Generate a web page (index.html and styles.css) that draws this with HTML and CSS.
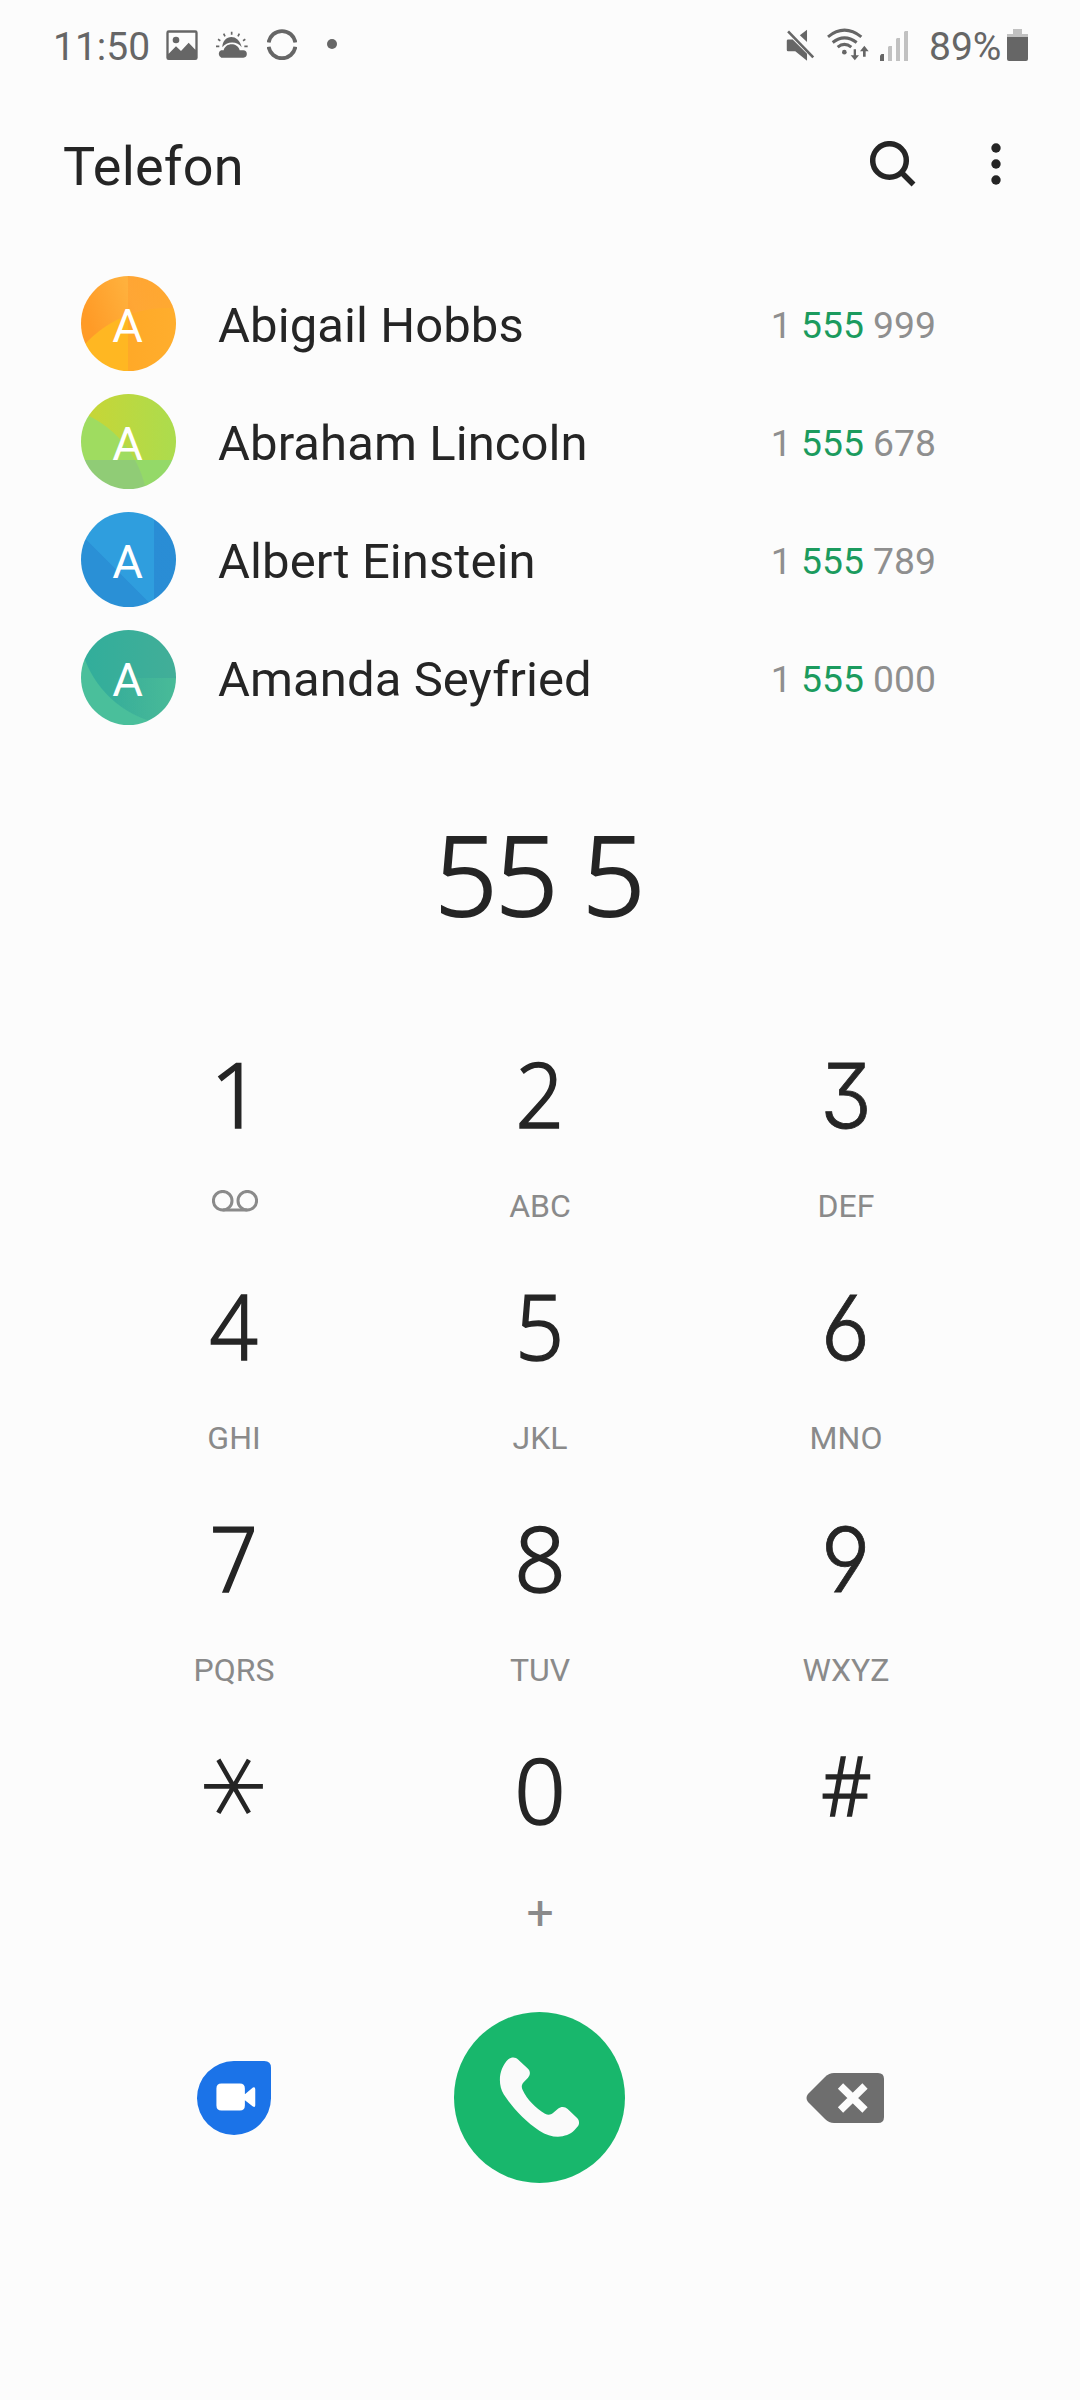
FILE: index.html
```html
<!DOCTYPE html>
<html lang="de">
<head>
<meta charset="utf-8">
<title>Telefon</title>
<link rel="stylesheet" href="styles.css">
</head>
<body>
<header class="status">
  <span class="time">11:50</span>
  <svg class="st-image" viewBox="378 58 96 90"><path fill-rule="evenodd" d="M386 59H466Q473 59 473 66V141Q473 148 466 148H386Q379 148 379 141V66Q379 59 386 59ZM386 66V129L408 107L423 121L446 96L466 117V66Z"/><circle cx="408" cy="88" r="10"/></svg>
  <svg class="st-weather" viewBox="528 60 96 87"><path d="M544 143A12 12 0 0 1 543 121H551C556 98 592 96 599 121H609A11 11 0 0 1 610 143Z"/><path d="M547 112C547 74 596 68 605 112C594 93 560 92 547 112Z"/><g class="ray"><path d="M575 65v9M551 71l4 8M598 71l-4 8M534 88l7 4M616 88l-7 4M528 109h10M613 109h10"/></g></svg>
  <svg class="st-sync" viewBox="680 56 92 94"><path class="arc" d="M685 97A41.500 41.500 0 0 1 767 97M685 110A41.500 41.500 0 0 0 767 110"/></svg>
  <svg class="st-dot" viewBox="0 0 10 10"><circle cx="5" cy="5" r="5"/></svg>
  <div class="status-right">
    <svg class="st-mute" viewBox="76 54 88 98"><path d="M82 86H96L140 130V151L104 122H82Q78 122 78 118V90Q78 86 82 86ZM118 73L140 56V94Z"/><path class="slash" d="M82 61L159 141"/></svg>
    <svg class="st-wifi" viewBox="200 54 126 98"><g class="waves"><path d="M203 80Q252 40 303 80"/><path d="M217 97Q252 69 289 97"/><path d="M232 111Q252 94 273 111"/></g><circle cx="252" cy="126" r="7"/><path d="M280 117H287V135H296L283.500 150L271 135H280ZM308 140V123H299L312 107L325 123H316V140Z"/></svg>
    <svg class="st-signal" viewBox="0 0 28 30"><path d="M0 24.500l1.500-1.500h2.500V30H0z"/><path class="faint" d="M8 16l1-1h3v15H8zM16 8l1-1h3v23H16zM24 1l1-1h3v30H24z"/></svg>
    <span class="percent">89%</span>
    <svg class="st-battery" viewBox="0 0 21 32"><path class="faint" d="M6 0h9v5h6v4H0V5h6z"/><path d="M0 8h21v22q0 2-2 2H2q-2 0-2-2z"/></svg>
  </div>
</header>

<div class="appbar">
  <h1>Telefon</h1>
  <svg class="search" viewBox="0 0 46 46"><circle cx="19.500" cy="19.500" r="16.800"/><path d="M31 31L43.500 43.500"/></svg>
  <svg class="more" viewBox="0 0 10 42"><circle cx="5" cy="5" r="4.700"/><circle cx="5" cy="21" r="4.700"/><circle cx="5" cy="37" r="4.700"/></svg>
</div>

<ul class="contacts">
  <li><span class="avatar orange"><span>A</span></span><span class="name">Abigail Hobbs</span><span class="number">1 <b>555</b> 999</span></li>
  <li><span class="avatar lime"><span>A</span></span><span class="name">Abraham Lincoln</span><span class="number">1 <b>555</b> 678</span></li>
  <li><span class="avatar blue"><span>A</span></span><span class="name">Albert Einstein</span><span class="number">1 <b>555</b> 789</span></li>
  <li><span class="avatar teal"><span>A</span></span><span class="name">Amanda Seyfried</span><span class="number">1 <b>555</b> 000</span></li>
</ul>

<div class="typed">55 5</div>

<main class="keypad">
  <div class="key"><div class="digit"><span class="one">1</span></div><div class="sub icon"><svg class="voicemail" viewBox="0 0 46 22"><circle cx="10.700" cy="10.700" r="9.300"/><circle cx="35.300" cy="10.700" r="9.300"/><path d="M10.700 20H35.300"/></svg></div></div>
  <div class="key"><div class="digit"><span class="two">2</span></div><div class="sub">ABC</div></div>
  <div class="key"><div class="digit"><span class="alt">3</span></div><div class="sub">DEF</div></div>
  <div class="key"><div class="digit"><span class="four">4</span></div><div class="sub">GHI</div></div>
  <div class="key"><div class="digit"><span class="five">5</span></div><div class="sub">JKL</div></div>
  <div class="key"><div class="digit"><span class="alt">6</span></div><div class="sub">MNO</div></div>
  <div class="key"><div class="digit"><span class="seven">7</span></div><div class="sub">PQRS</div></div>
  <div class="key"><div class="digit"><span>8</span></div><div class="sub">TUV</div></div>
  <div class="key"><div class="digit"><span class="alt">9</span></div><div class="sub">WXYZ</div></div>
  <div class="key"><div class="digit"><span class="star">*</span></div><div class="sub"></div></div>
  <div class="key"><div class="digit"><span>0</span></div><div class="sub plus">+</div></div>
  <div class="key"><div class="digit"><span class="hash">#</span></div><div class="sub"></div></div>
</main>

<footer class="actions">
  <svg class="duo" viewBox="20 31 221 221"><path class="drop" d="M130 31H221Q241 31 241 51V141A110.500 110.500 0 1 1 130 31Z"/><path class="cam" d="M93 98H148Q163 98 163 113V130L187 110Q194 107 194 115V163Q194 171 187 167L163 148V164Q163 179 148 179H93Q78 179 78 164V113Q78 98 93 98Z"/></svg>
  <svg class="call" viewBox="27 21 513 513"><circle cx="283.500" cy="277.500" r="256.500"/><path d="M190 163C200 155 212 156 220 164L249 191C257 199 256 210 249 218L236 232C229 240 229 246 233 255C246 283 272 310 300 326C309 331 317 330 324 324L339 311C348 304 360 304 368 312L397 340C404 348 404 359 396 367L388 376C366 398 324 404 283 377C240 349 200 305 176 268C157 235 162 190 190 163Z"/></svg>
  <svg class="backspace" viewBox="0 0 78 50"><path d="M28 0H72Q78 0 78 6V44Q78 50 72 50H28Q23 50 19 46L2 29Q-1 25 2 21L19 4Q23 0 28 0Z"/><path class="x" d="M34.500 13L59 37M59 13L34.500 37"/></svg>
</footer>
</body>
</html>
```
FILE: styles.css
```css
* { box-sizing: border-box; }
body {
  margin: 0;
  width: 1080px;
  height: 2400px;
  overflow: hidden;
  background: #fcfcfc;
  color: #252525;
  font-family: Roboto, sans-serif;
  display: flex;
  flex-direction: column;
}
svg { display: block; flex: none; }

/* Status bar */
.status {
  height: 94px;
  padding: 0 52px 0 53px;
  display: flex;
  align-items: center;
  color: #666;
  fill: #666;
  font-size: 39px;
}
.status svg { margin-bottom: 5px; }
.time { width: 113px; }
.st-image { width: 32px; height: 30px; margin-right: 18px; }
.st-weather { width: 32px; height: 29px; margin-right: 19px; overflow: visible; }
.ray { stroke: #666; stroke-width: 5; }
.st-sync { width: 30px; height: 31px; margin-right: 30px; }
.arc { fill: none; stroke: #666; stroke-width: 12; }
.status .st-dot { width: 10px; height: 10px; margin-bottom: 6px; }
.status-right { margin-left: auto; display: flex; align-items: center; }
.st-mute { width: 29px; height: 32px; margin-right: 12px; }
.slash { stroke: #666; stroke-width: 8; }
.st-wifi { width: 42px; height: 33px; margin-right: 11px; }
.waves { fill: none; stroke: #666; stroke-width: 9; }
.st-signal { width: 28px; height: 30px; margin-right: 21px; }
.status .st-signal { margin-bottom: 3px; }
.faint { fill: #c1c1c1; }
.percent { width: 78px; }
.st-battery { width: 21px; height: 32px; }

/* App bar */
.appbar {
  height: 145px;
  padding: 0 79.5px 0 63px;
  display: flex;
  align-items: center;
}
.appbar h1 { margin: 0; font-size: 54px; font-weight: 400; letter-spacing: .2px; flex: 1; }
.appbar svg { margin-bottom: 6px; }
.search { width: 46px; height: 46px; fill: none; stroke: #252525; stroke-width: 5.5; }
.more { width: 10px; height: 42px; margin-left: 75px; fill: #252525; }

/* Matching contacts */
.contacts { margin: 0; padding: 25.5px 144px 0 81px; list-style: none; }
.contacts li { height: 118px; display: flex; align-items: center; }
.avatar {
  width: 95px;
  height: 95px;
  border-radius: 50%;
  display: flex;
  align-items: center;
  justify-content: center;
  color: #fff;
  font-size: 47px;
  padding: 4px 2px 0 0;
}
.orange { background: linear-gradient(90deg, transparent 50%, rgba(255,155,45,.5) 50%, rgba(255,170,50,.7)), radial-gradient(circle at 86px 143px, #ffb722 110.5px, transparent 111.5px), linear-gradient(70deg, #ff9b27 20%, #ffb13d 60%, #ffa52c); }
.lime {
  background:
    radial-gradient(circle at -39px 51px, #90cc76 105.5px, transparent 106.5px) 0 66px no-repeat,
    linear-gradient(transparent 66px, #94d968 66px),
    radial-gradient(circle at -39px 117px, #9fdc60 105.5px, transparent 106.5px),
    linear-gradient(90deg, #c9d534, #acdc4e);
}
.blue { background: linear-gradient(90deg, transparent 73px, rgba(41,139,212,.9) 73px), linear-gradient(45deg, #2a90d6 38%, #2f9ede 38.5%); }
.teal { background: radial-gradient(circle at 99px -6px, transparent 101px, #4abf9b 102px), linear-gradient(90deg, transparent 30px, rgba(80,202,152,.45)) 0 48px no-repeat, linear-gradient(90deg, #31ae9b, #42ae98); }
.name { flex: 1; margin-left: 42px; padding-top: 4px; font-size: 49px; letter-spacing: .08px; }
.number { padding-top: 2px; font-size: 37.3px; color: #8f8f8f; }
.number b { font-weight: 400; color: #1b9b5e; }

.typed {
  height: 272px;
  padding-right: 3px;
  line-height: 272px;
  text-align: center;
  font-family: "Noto Sans", sans-serif;
  font-size: 111px;
  font-weight: 300;
  letter-spacing: -2.6px;
  -webkit-text-stroke: 1.8px #252525;
}

/* Keypad */
.keypad {
  width: 918px;
  margin: 0 auto;
  display: grid;
  grid-template-columns: repeat(3, 1fr);
  grid-auto-rows: 232px;
}
.key { padding-top: 19px; text-align: center; }
.digit {
  height: 130px;
  line-height: 130px;
  font-family: "Noto Sans", sans-serif;
  font-size: 90px;
  font-weight: 300;
  -webkit-text-stroke: 1.6px #252525;
}
.digit span { display: inline-block; line-height: 1; }
.digit .alt {
  font-family: Inter, sans-serif;
  font-size: 89px;
  font-weight: 350;
  font-feature-settings: "cv03", "cv04", "cv09";
  -webkit-text-stroke: .8px #252525;
  transform: scaleX(.96);
}
.digit .one { transform: translateX(2px); }
.digit .two { transform: scaleX(.94); }
.digit .four, .digit .seven { transform: scaleX(.94); }
.digit .five { transform: scaleX(.95); }
.digit .hash { font-size: 82px; transform: translateY(-8px) scaleX(.95); }
.digit .star {
  font-family: "DejaVu Sans", sans-serif;
  font-weight: 200;
  font-size: 125px;
  -webkit-text-stroke: 1.8px #252525;
  transform: translateX(-22px) rotate(90deg);
}
.sub {
  height: 40px;
  margin-top: 28.5px;
  line-height: 40px;
  font-size: 32px;
  color: #8a8a8a;
}
.plus { font-size: 48px; padding-top: 11px; }
.icon { padding-top: 4px; }
.voicemail { width: 46px; height: 22px; margin: 0 auto; transform: translateX(1px); fill: none; stroke: #8a8a8a; stroke-width: 3; }

/* Call actions */
.actions {
  width: 918px;
  height: 322px;
  margin: 0 auto;
  padding-right: 1px;
  display: grid;
  grid-template-columns: repeat(3, 1fr);
  align-items: center;
  justify-items: center;
}
.duo { width: 74px; height: 74px; }
.drop { fill: #1b73e8; }
.cam { fill: #fff; }
.call { width: 171px; height: 171px; fill: #fafafa; }
.call circle { fill: #18b76c; }
.backspace { width: 78px; height: 50px; fill: #6e6e6e; }
.x { stroke: #fcfcfc; stroke-width: 7.5; }
```
